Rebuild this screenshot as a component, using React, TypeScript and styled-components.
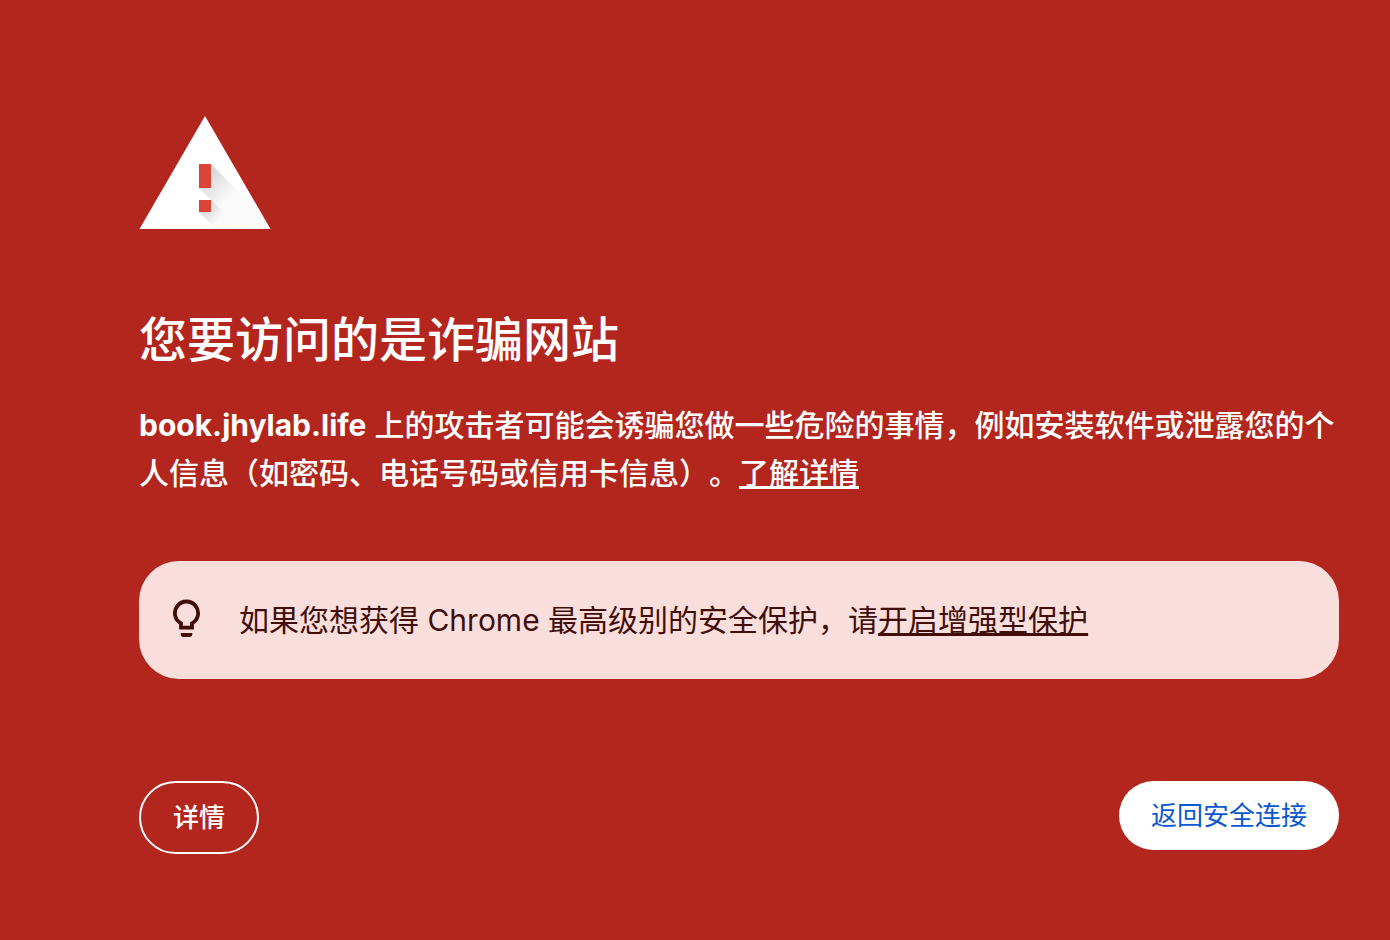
import React from "react";
import styled, { createGlobalStyle } from "styled-components";

const GlobalStyle = createGlobalStyle`
  * {
    box-sizing: border-box;
  }

  body {
    margin: 0;
    background: #b3261e;
    color: #fff;
    font-family: Inter, "Noto Sans CJK SC", sans-serif;
    font-size: 30px;
    line-height: 48px;
    text-spacing-trim: space-all;
  }
`;

const Page = styled.main`
  padding: 116px 51px 86px 139px;
`;

const WarningIcon = styled.svg`
  display: block;
  width: 132px;
  height: 114px;
`;

const Title = styled.h1`
  margin: 80px 0 31px;
  font-size: 48px;
  font-weight: 500;
  line-height: 60px;
`;

const Message = styled.p`
  margin: 0;
  font-weight: 500;
`;

const TextLink = styled.a`
  color: inherit;
  text-decoration: underline;
`;

const Tip = styled.section`
  display: flex;
  align-items: flex-start;
  gap: 38px;
  margin-top: 64px;
  padding: 35px 34px;
  border-radius: 40px;
  background: #f9dedc;
  color: #410e0b;
`;

const TipIcon = styled.svg`
  flex: none;
  width: 28px;
  height: 40px;
  margin-top: 3px;
`;

const TipText = styled.p`
  margin: 0;
`;

const Actions = styled.div`
  display: flex;
  align-items: flex-start;
  justify-content: space-between;
  margin-top: 102px;
`;

const Button = styled.button<{ $primary?: boolean }>`
  padding: 16px 32px;
  border: ${(p) => (p.$primary ? "0" : "2px solid #fff")};
  border-radius: 40px;
  background: ${(p) => (p.$primary ? "#fff" : "transparent")};
  color: ${(p) => (p.$primary ? "#0b57d0" : "#fff")};
  font-family: inherit;
  font-size: 26px;
  font-weight: ${(p) => (p.$primary ? 400 : 500)};
  line-height: 37px;
  cursor: pointer;
`;

export default function App() {
  return (
    <>
      <GlobalStyle />
      <Page>
        <WarningIcon viewBox="0 0 132 114" aria-hidden="true">
          <defs>
            <clipPath id="triangle">
              <path d="M66 0 131.500 113H.5Z" />
            </clipPath>
            <linearGradient id="barShade" gradientUnits="userSpaceOnUse" x1="62" y1="50" x2="92" y2="80">
              <stop offset="0" stopColor="#000" stopOpacity=".2" />
              <stop offset="1" stopColor="#000" stopOpacity=".02" />
            </linearGradient>
            <linearGradient id="dotShade" gradientUnits="userSpaceOnUse" x1="62" y1="86" x2="80" y2="104">
              <stop offset="0" stopColor="#000" stopOpacity=".2" />
              <stop offset="1" stopColor="#000" stopOpacity=".02" />
            </linearGradient>
          </defs>
          <path fill="#fff" d="M66 0 131.500 113H.5Z" />
          <g clipPath="url(#triangle)">
            <path fill="url(#barShade)" d="M72 48 137 113H101L60 72Z" />
            <path fill="url(#dotShade)" d="M72 84 101 113H77L60 96Z" />
          </g>
          <path fill="#db4437" d="M60 48h12v24H60zM60 84h12v12H60z" />
        </WarningIcon>

        <Title>您要访问的是诈骗网站</Title>
        <Message>
          <strong>book.jhylab.life</strong>{" "}
          上的攻击者可能会诱骗您做一些危险的事情，例如安装软件或泄露您的个人信息（如密码、电话号码或信用卡信息）。<TextLink href="#learn-more">了解详情</TextLink>
        </Message>

        <Tip>
          <TipIcon viewBox="0 0 28 40" aria-hidden="true">
            <path
              d="M8 28.700V24.300A11.600 11.600 0 1 1 19 24.300V28.700Z"
              fill="none"
              stroke="currentColor"
              strokeWidth="3.800"
            />
            <path d="M7.700 34h11.600v1.600a2.400 2.400 0 0 1-2.400 2.400h-6.800a2.400 2.400 0 0 1-2.400-2.400Z" fill="currentColor" />
          </TipIcon>
          <TipText>
            如果您想获得 Chrome 最高级别的安全保护，请<TextLink href="#enhanced-protection">开启增强型保护</TextLink>
          </TipText>
        </Tip>

        <Actions>
          <Button type="button">详情</Button>
          <Button type="button" $primary>
            返回安全连接
          </Button>
        </Actions>
      </Page>
    </>
  );
}
